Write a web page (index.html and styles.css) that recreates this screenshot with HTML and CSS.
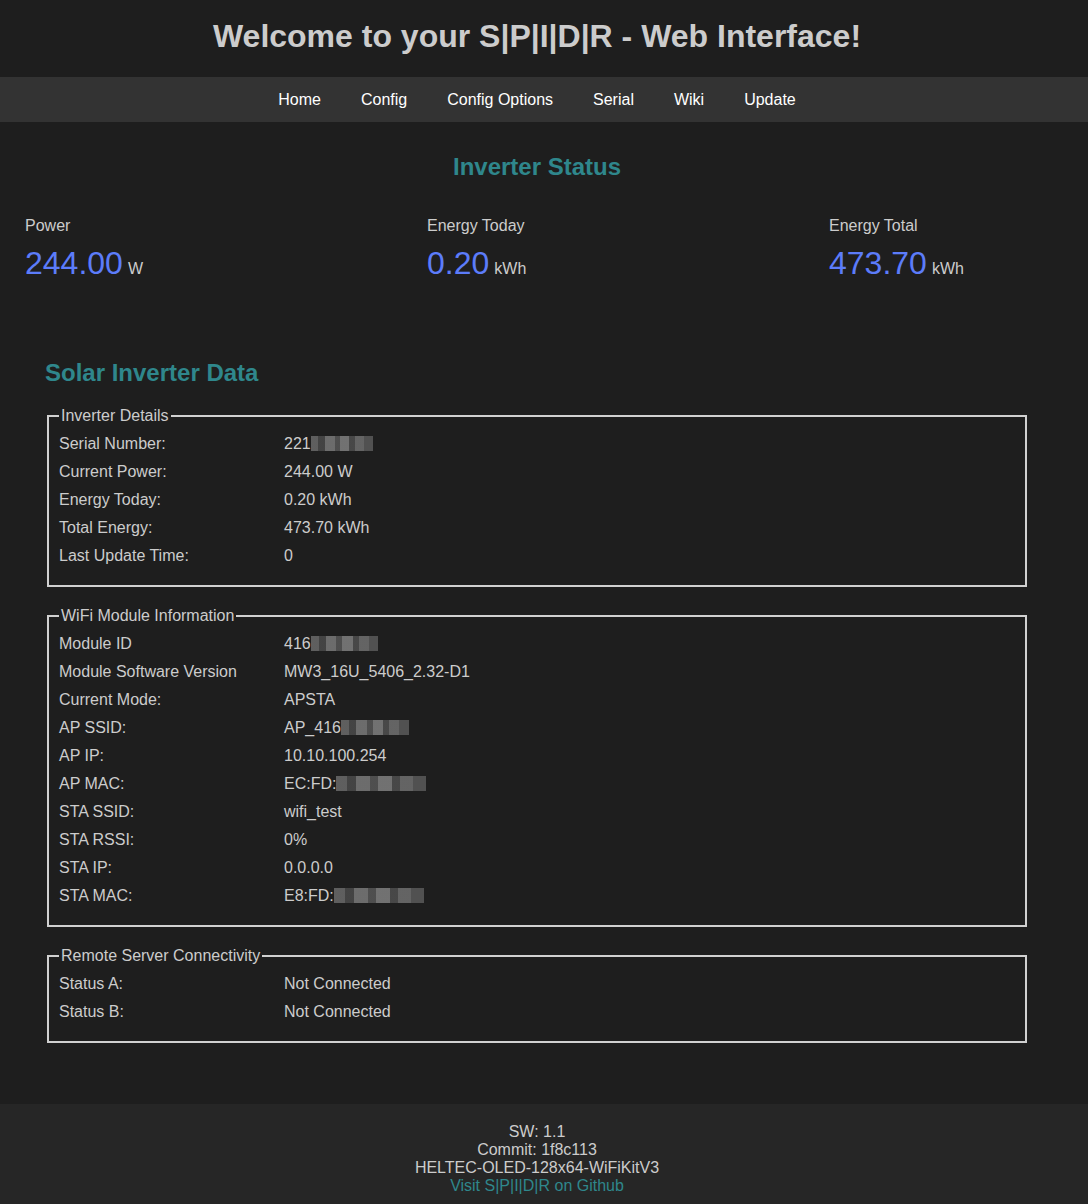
FILE: index.html
```html
<!DOCTYPE html>
<html lang="en">
<head>
<meta charset="utf-8">
<title>S|P|I|D|R - Web Interface</title>
<link rel="stylesheet" href="styles.css">
</head>
<body>
<header class="site-header">
  <h1 class="site-title">Welcome to your S|P|I|D|R - Web Interface!</h1>
</header>
<nav class="site-nav">
  <a href="#" class="nav-link">Home</a>
  <a href="#" class="nav-link">Config</a>
  <a href="#" class="nav-link">Config Options</a>
  <a href="#" class="nav-link">Serial</a>
  <a href="#" class="nav-link">Wiki</a>
  <a href="#" class="nav-link">Update</a>
</nav>
<main class="content">
  <section class="status">
    <h2 class="section-title centered">Inverter Status</h2>
    <div class="stats">
      <div class="stat">
        <div class="stat-label">Power</div>
        <div class="stat-value"><span class="stat-number">244.00</span><span class="stat-unit">W</span></div>
      </div>
      <div class="stat">
        <div class="stat-label">Energy Today</div>
        <div class="stat-value"><span class="stat-number">0.20</span><span class="stat-unit">kWh</span></div>
      </div>
      <div class="stat">
        <div class="stat-label">Energy Total</div>
        <div class="stat-value"><span class="stat-number">473.70</span><span class="stat-unit">kWh</span></div>
      </div>
    </div>
  </section>

  <section class="data">
    <h2 class="section-title">Solar Inverter Data</h2>

    <fieldset class="group">
      <legend class="group-legend">Inverter Details</legend>
      <div class="rows">
        <div class="key">Serial Number:</div><div class="val">221<span class="masked m-serial"></span></div>
        <div class="key">Current Power:</div><div class="val">244.00 W</div>
        <div class="key">Energy Today:</div><div class="val">0.20 kWh</div>
        <div class="key">Total Energy:</div><div class="val">473.70 kWh</div>
        <div class="key">Last Update Time:</div><div class="val">0</div>
      </div>
    </fieldset>

    <fieldset class="group">
      <legend class="group-legend">WiFi Module Information</legend>
      <div class="rows">
        <div class="key">Module ID</div><div class="val">416<span class="masked m-id"></span></div>
        <div class="key">Module Software Version</div><div class="val">MW3_16U_5406_2.32-D1</div>
        <div class="key">Current Mode:</div><div class="val">APSTA</div>
        <div class="key">AP SSID:</div><div class="val">AP_416<span class="masked m-ssid"></span></div>
        <div class="key">AP IP:</div><div class="val">10.10.100.254</div>
        <div class="key">AP MAC:</div><div class="val">EC:FD:<span class="masked m-mac"></span></div>
        <div class="key">STA SSID:</div><div class="val">wifi_test</div>
        <div class="key">STA RSSI:</div><div class="val">0%</div>
        <div class="key">STA IP:</div><div class="val">0.0.0.0</div>
        <div class="key">STA MAC:</div><div class="val">E8:FD:<span class="masked m-mac2"></span></div>
      </div>
    </fieldset>

    <fieldset class="group">
      <legend class="group-legend">Remote Server Connectivity</legend>
      <div class="rows">
        <div class="key">Status A:</div><div class="val">Not Connected</div>
        <div class="key">Status B:</div><div class="val">Not Connected</div>
      </div>
    </fieldset>
  </section>
</main>
<footer class="site-footer">
  <div>SW: 1.1</div>
  <div>Commit: 1f8c113</div>
  <div>HELTEC-OLED-128x64-WiFiKitV3</div>
  <div><a href="#" class="footer-link">Visit S|P|I|D|R on Github</a></div>
</footer>
</body>
</html>
```

FILE: styles.css
```css
html, body {
  margin: 0;
  padding: 0;
}

body {
  background: #1e1e1e;
  color: #cccccc;
  font-family: "Liberation Sans", Arial, sans-serif;
  font-size: 16px;
}

.site-header {
  background: #1e1e1e;
  padding: 18px 14px 22px 0;
  text-align: center;
}

.site-title {
  margin: 0;
  font-size: 32px;
  font-weight: bold;
  line-height: 37px;
  color: #cccccc;
}

.site-nav {
  background: #333333;
  height: 45px;
  display: flex;
  justify-content: center;
  align-items: center;
  gap: 40px;
  padding-right: 14px;
}

.nav-link {
  color: #ffffff;
  text-decoration: none;
  font-size: 16px;
}

.content {
  padding: 11px 39px 41px 25px;
}

.section-title {
  color: #2f878c;
  font-size: 24px;
  font-weight: bold;
  line-height: 28px;
  margin: 20px 0;
}

.centered {
  text-align: center;
}

.stats {
  display: grid;
  grid-template-columns: 402px 402px 1fr;
  padding: 16px 0 15px;
}

.stat-label {
  line-height: 18px;
  color: #cccccc;
}

.stat-value {
  margin-top: 10px;
  line-height: 37px;
}

.stat-number {
  font-size: 32px;
  color: #5c7cfa;
}

.stat-unit {
  font-size: 16px;
  color: #cccccc;
  margin-left: 5px;
}

.data {
  padding: 37px 20px 0 20px;
}

.group {
  margin: 0 2px 20px 2px;
  padding: 5px 12px 15px 10px;
  border: 2px solid #d0d0d0;
}

.group-legend {
  padding: 0 2px;
  color: #cccccc;
  line-height: 18px;
}

.rows {
  display: grid;
  grid-template-columns: 225px 1fr;
  grid-auto-rows: 28px;
  align-items: center;
}

.key, .val {
  line-height: 28px;
  white-space: nowrap;
}

.masked {
  display: inline-block;
  height: 15px;
  vertical-align: -2px;
  background: linear-gradient(to right,
    #6a6a6a 0 12%, #4a4a4a 12% 22%, #7a7a7a 22% 38%, #575757 38% 47%,
    #808080 47% 62%, #4f4f4f 62% 71%, #707070 71% 86%, #5a5a5a 86% 100%);
  opacity: 0.85;
}

.m-serial { width: 62px; }
.m-id { width: 67px; }
.m-ssid { width: 68px; }
.m-mac { width: 90px; }
.m-mac2 { width: 90px; }

.site-footer {
  background: #262626;
  padding: 19px 14px 20px 0;
  text-align: center;
  line-height: 18px;
  color: #cccccc;
}

.footer-link {
  color: #2f878c;
  text-decoration: none;
}
```
